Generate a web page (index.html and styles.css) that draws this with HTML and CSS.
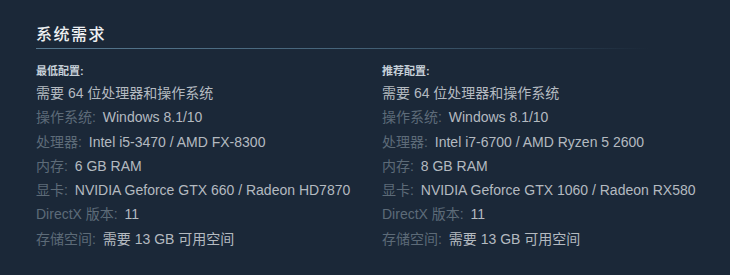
FILE: index.html
```html
<!DOCTYPE html>
<html lang="zh">
<head>
<meta charset="utf-8">
<link rel="stylesheet" href="styles.css">
</head>
<body>
<div class="sysreq">
  <h2 class="title">系统需求</h2>
  <div class="cols">
    <div class="col">
      <div class="sub">最低配置:</div>
      <ul class="list">
        <li><span class="val">需要 64 位处理器和操作系统</span></li>
        <li><span class="lbl">操作系统:</span> <span class="val">Windows 8.1/10</span></li>
        <li><span class="lbl">处理器:</span> <span class="val">Intel i5-3470 / AMD FX-8300</span></li>
        <li><span class="lbl">内存:</span> <span class="val">6 GB RAM</span></li>
        <li><span class="lbl">显卡:</span> <span class="val">NVIDIA Geforce GTX 660 / Radeon HD7870</span></li>
        <li><span class="lbl">DirectX 版本:</span> <span class="val">11</span></li>
        <li><span class="lbl">存储空间:</span> <span class="val">需要 13 GB 可用空间</span></li>
      </ul>
    </div>
    <div class="col">
      <div class="sub">推荐配置:</div>
      <ul class="list">
        <li><span class="val">需要 64 位处理器和操作系统</span></li>
        <li><span class="lbl">操作系统:</span> <span class="val">Windows 8.1/10</span></li>
        <li><span class="lbl">处理器:</span> <span class="val">Intel i7-6700 / AMD Ryzen 5 2600</span></li>
        <li><span class="lbl">内存:</span> <span class="val">8 GB RAM</span></li>
        <li><span class="lbl">显卡:</span> <span class="val">NVIDIA Geforce GTX 1060 / Radeon RX580</span></li>
        <li><span class="lbl">DirectX 版本:</span> <span class="val">11</span></li>
        <li><span class="lbl">存储空间:</span> <span class="val">需要 13 GB 可用空间</span></li>
      </ul>
    </div>
  </div>
</div>
</body>
</html>
```
FILE: styles.css
```css
html, body {
  margin: 0;
  padding: 0;
  background: #1b2838;
  height: 100%;
}
body {
  font-family: "Liberation Sans", Arial, "Noto Sans CJK SC", sans-serif;
  color: #acb2b8;
}
.sysreq {
  padding: 24px 0 0 36px;
  width: 612px;
}
.title {
  margin: 0;
  font-size: 16px;
  font-weight: 500;
  line-height: 21px;
  letter-spacing: 1.5px;
  color: #eef0f2;
  padding-bottom: 3px;
  border-bottom: 1px solid transparent;
  border-image: linear-gradient(to right, #56778e 0%, #46647a 50%, rgba(70,100,122,0.45) 80%, rgba(27,40,56,0) 100%) 1;
}
.cols {
  display: grid;
  grid-template-columns: 346px 1fr;
  margin-top: 14px;
}
.sub {
  font-size: 11px;
  font-weight: bold;
  line-height: 16px;
  color: #c6d0d8;
  margin-bottom: 2px;
}
.list {
  list-style: none;
  margin: 0;
  padding: 0;
}
.list li {
  font-size: 14px;
  line-height: 24.3px;
  white-space: nowrap;
}
.lbl {
  color: #5d6b78;
  margin-right: 3px;
}
.val {
  color: #b4bac0;
}
```
